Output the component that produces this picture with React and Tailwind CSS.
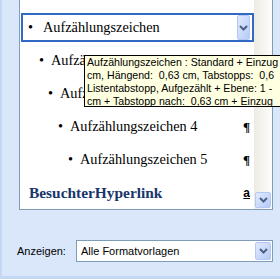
import React from 'react';

const serif = { fontFamily: "'Liberation Serif', 'Times New Roman', serif" };
const ui = { fontFamily: "'Liberation Sans', Tahoma, Arial, sans-serif" };

const Chevron = () => (
  <svg width="9" height="6" viewBox="0 0 9 6">
    <path d="M1 1 L4.5 4.5 L8 1" fill="none" stroke="#4d6185" strokeWidth="2" />
  </svg>
);

const ArrowButton = ({ className }) => (
  <div className={`flex items-center justify-center rounded-[2px] border border-[#b4c8f5] bg-gradient-to-br from-[#e0eafe] to-[#b6cbf8] ${className}`}>
    <Chevron />
  </div>
);

const rows = [
  { pad: 'pl-[19px]', text: 'Aufzählungszeichen 2', mark: '¶' },
  { pad: 'pl-[28px]', text: 'Aufzählungszeichen 3', mark: '¶' },
  { pad: 'pl-[38px]', text: 'Aufzählungszeichen 4', mark: '¶' },
  { pad: 'pl-[48px]', text: 'Aufzählungszeichen 5', mark: '¶' },
];

const tooltipLines = [
  'Aufzählungszeichen : Standard + Einzug',
  'cm, Hängend:  0,63 cm, Tabstopps:  0,6',
  'Listentabstopp, Aufgezählt + Ebene: 1 -',
  'cm + Tabstopp nach:  0,63 cm + Einzug',
];

export default function App() {
  return (
    <div className="relative w-[280px] h-[279px] overflow-hidden bg-[#dae7fb] border-l-2 border-b-[3px] border-[#c4d8f6]">
      {/* Formatvorlagen list */}
      <div className="ml-[17px] w-[254px] h-[210px] flex bg-white border-l border-r border-b border-[#7f9db9]">
        <div className="flex-1 flex flex-col pt-[13px] text-black" style={serif}>
          <div className="ml-[1px] h-[31px] border-2 border-[#316ac5] flex items-center pl-[5px] pr-[2px]">
            <span className="w-[15px] text-[14.3px]">•</span>
            <span className="flex-1 text-[14.3px]">Aufzählungszeichen</span>
            <ArrowButton className="w-[13px] h-[25px]" />
          </div>
          <div className="pt-[2px] flex flex-col">
            {rows.map((r) => (
              <div key={r.text} className={`h-[33px] flex items-center justify-between pr-[4px] ${r.pad}`}>
                <div className="flex items-center text-[14.3px]">
                  <span className="w-[12px]">•</span>
                  <span>{r.text}</span>
                </div>
                <span className="text-[13px] font-bold">{r.mark}</span>
              </div>
            ))}
            <div className="h-[33px] flex items-center justify-between pl-[9px] pr-[4px]">
              <span className="text-[15.4px] font-bold text-[#17366b]">BesuchterHyperlink</span>
              <span className="text-[12px] font-bold underline" style={ui}>a</span>
            </div>
          </div>
        </div>
        {/* scrollbar */}
        <div className="w-[18px] flex flex-col justify-end pb-[1px] pl-[1px] bg-gradient-to-r from-[#edebe3] to-[#fdfdfb]">
          <ArrowButton className="w-[16px] h-[16px]" />
        </div>
      </div>

      {/* Anzeigen */}
      <div className="mt-[30px] pl-[15px] flex items-center text-[11px] text-black" style={ui}>
        <span className="w-[59px]">Anzeigen:</span>
        <div className="w-[197px] h-[22px] bg-white border border-[#7f9db9] flex items-center justify-between pl-[4px] pr-[1px]">
          <span>Alle Formatvorlagen</span>
          <ArrowButton className="w-[16px] h-[18px]" />
        </div>
      </div>

      {/* tooltip */}
      <div className="absolute left-[82px] top-[55px] w-[240px] h-[52px] bg-[#ffffe1] border border-black pl-[2px] text-[10.6px] leading-[13px] text-black whitespace-pre" style={ui}>
        {tooltipLines.map((l) => (
          <div key={l}>{l}</div>
        ))}
      </div>
    </div>
  );
}
